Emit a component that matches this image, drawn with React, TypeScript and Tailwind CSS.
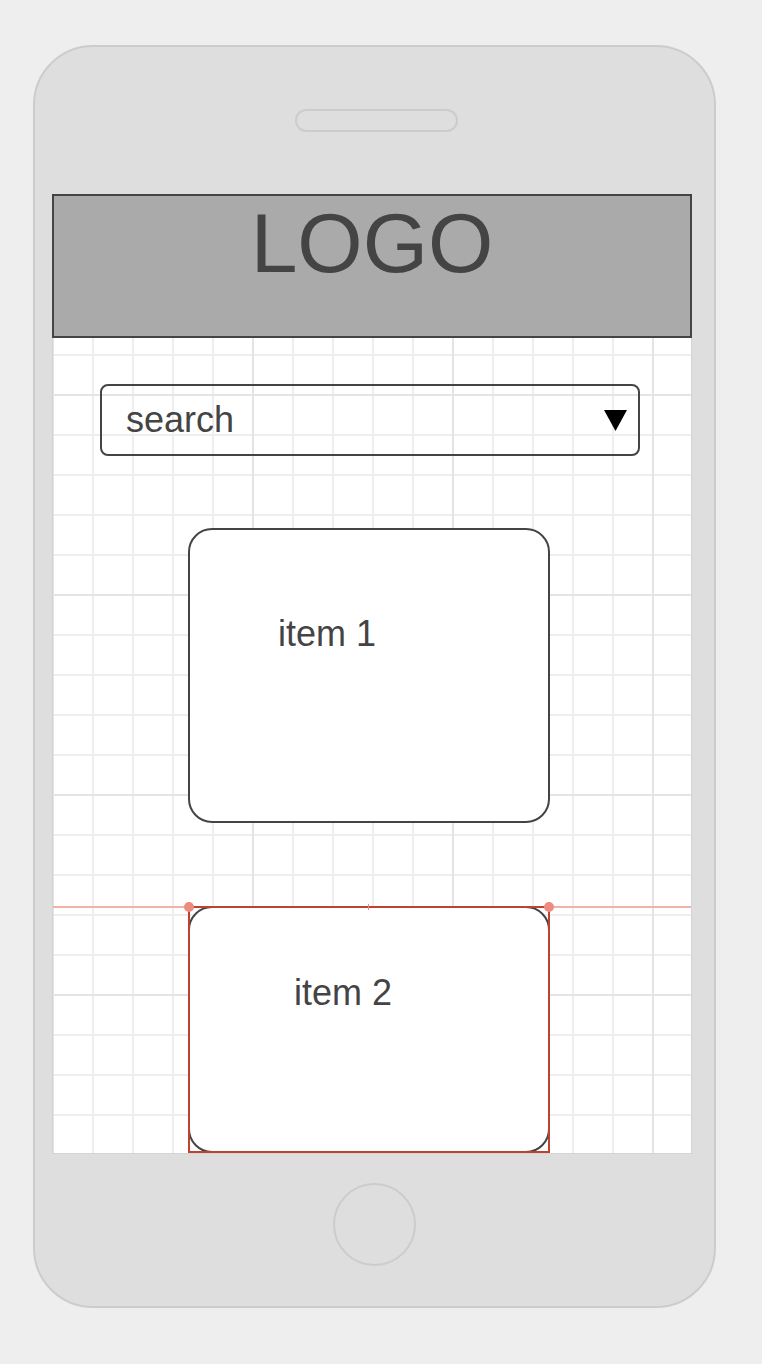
import React from "react";

export default function App() {
  return (
    <div className="w-full h-[1364px] bg-[#eeeeee] pl-[33px] pt-[45px] font-['Liberation_Sans',Arial,sans-serif] text-[#444444]">
      <div className="w-[683px] h-[1263px] rounded-[60px] border-2 border-[#cccccc] bg-[#dedede] flex flex-col">
        <div className="ml-[260px] mt-[62px] w-[163px] h-[23px] rounded-full border-2 border-[#cccccc] bg-[#dedede]" />
        <div className="ml-[17px] mt-[62px] w-[640px] h-[960px] border border-[#d4d4d4] bg-white bg-[linear-gradient(to_right,#e4e4e4_2px,transparent_2px),linear-gradient(to_bottom,#e4e4e4_2px,transparent_2px),linear-gradient(to_right,#eeeeee_2px,transparent_2px),linear-gradient(to_bottom,#eeeeee_2px,transparent_2px)] bg-size-[200px_200px,200px_200px,40px_40px,40px_40px] bg-position-[-1px_-1px] flex flex-col">
          <div className="-mx-px -mt-px h-[144px] border-2 border-[#444444] bg-[#aaaaaa] flex justify-center pt-[5px]">
            <span className="text-[84px] leading-[84px] text-[#444444]">LOGO</span>
          </div>
          <div className="ml-[47px] mt-[46px] w-[540px] h-[72px] rounded-[8px] border-2 border-[#444444] flex items-center justify-between pl-[24px] pr-[11px]">
            <span className="text-[36px] leading-[36px]">search</span>
            <svg width="23" height="21" viewBox="0 0 23 21" className="block mt-[2px]">
              <polygon points="0,0 23,0 11.5,21" fill="#000000" />
            </svg>
          </div>
          <div className="ml-[135px] mt-[72px] w-[362px] h-[296px] rounded-[24px] border-2 border-[#444444] bg-white pl-[88px] pt-[86px]">
            <span className="text-[36px] leading-[36px]">item 1</span>
          </div>
          <div className="relative ml-[135px] mt-[83px] w-[362px] h-[247px]">
            <div className="absolute left-[-135px] right-[-141px] top-0 h-[2px] bg-[#f3b2a7]" />
            <div className="absolute inset-0 rounded-[24px] border-2 border-[#444444] bg-white pl-[104px] pt-[67px]">
              <span className="text-[36px] leading-[36px]">item 2</span>
            </div>
            <div className="absolute inset-0 border-2 border-[#bd4330]" />
            <div className="absolute left-[180px] top-[-2px] w-px h-[6px] bg-[#e88a7c]" />
            <div className="absolute left-[-4px] top-[-4px] w-[10px] h-[10px] rounded-full bg-[#ec8c7e]" />
            <div className="absolute left-[356px] top-[-4px] w-[10px] h-[10px] rounded-full bg-[#ec8c7e]" />
          </div>
        </div>
        <div className="ml-[298px] mt-[29px] w-[83px] h-[83px] rounded-full border-2 border-[#cccccc]" />
      </div>
    </div>
  );
}
